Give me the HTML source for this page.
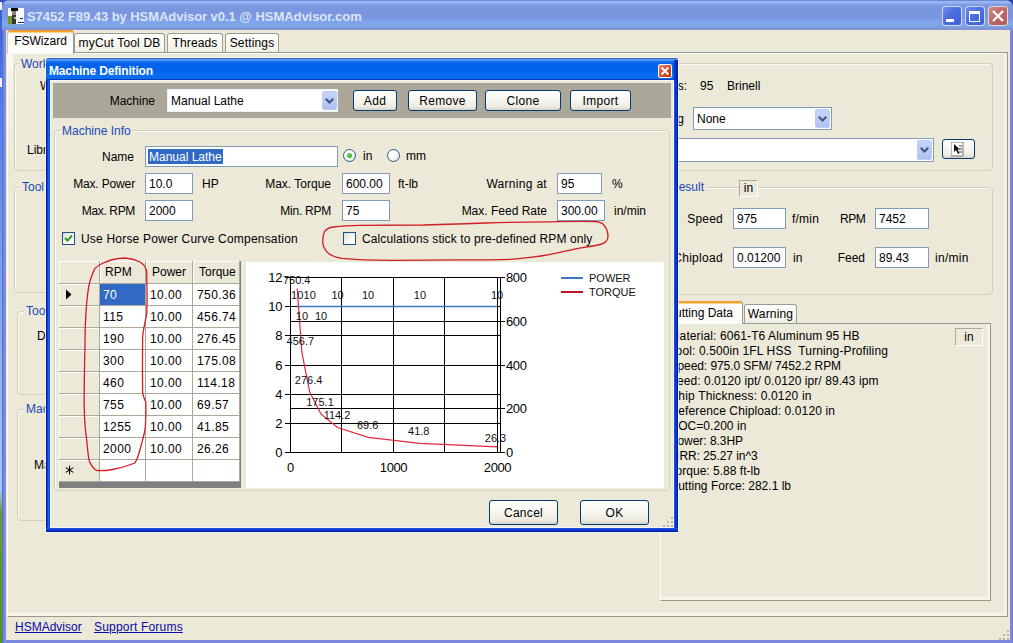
<!DOCTYPE html>
<html>
<head>
<meta charset="utf-8">
<title>S7452 F89.43 by HSMAdvisor v0.1 @ HSMAdvisor.com</title>
<style>
*{box-sizing:border-box;margin:0;padding:0}
html,body{width:1013px;height:643px;overflow:hidden}
body{position:relative;font-family:"Liberation Sans",sans-serif;font-size:12px;color:#000;
 background:linear-gradient(to bottom,#3a5cd0 0,#4a78e8 80px,#7aa4ec 280px,#a8c8f4 490px,#6a9a30 512px,#4f9a14 643px);}
.a{position:absolute}
.t{position:absolute;white-space:nowrap;font-size:12px;line-height:14px;color:#000}
.b{color:#1a4ab4}
/* main window */
#win{left:2px;top:0;width:1011px;height:643px;background:linear-gradient(to right,#5a70d0 0,#5a70d0 1px,#7080e0 1px,#7080e0 2px,#8090d8 2px,#8090d8 4px,#7a88de 4px,#7a88de 1008px,#8088e8 1009px,#7078d0 1011px);border-radius:8px 8px 0 0;overflow:hidden}
#tbar{left:0;top:0;width:1011px;height:30px;background:linear-gradient(to bottom,#6a8acb 0,#6a8acb 1px,#98b6f8 1px,#95b2f5 3px,#86a3e6 4px,#7e9be1 5px,#7a96df 7px,#7a96df 17px,#7d9be5 19px,#7fa3ef 21px,#7fa3ef 23px,#7ba6e0 24px,#7ba6e0 27px,#7c90e0 28px,#8a92d0 29px,#8a92d0 30px)}
#ttl{left:25px;top:8px;font-family:"Liberation Sans",sans-serif;font-weight:bold;font-size:13px;line-height:18px;color:#dbe5f9;letter-spacing:-.05px;white-space:nowrap}
.cb{top:6px;width:20px;height:20px;border:1px solid rgba(235,240,255,.8);border-radius:4px;background:linear-gradient(135deg,#6d8cec 0,#4a6ee0 45%,#3f61d6 100%)}
#client{left:4px;top:30px;width:1004px;height:610px;background:#ece9d8}
/* tabs */
.tab{position:absolute;top:3px;height:20px;border:1px solid #9a9c92;letter-spacing:.15px;border-bottom:none;border-radius:3px 3px 0 0;background:linear-gradient(to bottom,#ffffff,#f3f2ea 80%,#ebe9dc);font-size:12px;line-height:18px;text-align:center;white-space:nowrap}
.tab.sel{letter-spacing:0;top:0px;height:24px;background:#fcfcfa;border-top:2px solid #f0a030;padding-top:1px;box-shadow:inset 0 1px 0 #fbd48a;border-left-color:#c8c8bc;line-height:17px;z-index:3}
#page{left:1px;top:22px;width:1001px;height:565px;border:1px solid #919b9c;border-left-color:#fdfdfb;border-right-color:#9a978a;border-bottom-color:#9a978a;box-shadow:inset -3px -3px 0 #f5f3ea;background:linear-gradient(to bottom,#fbfbf7 0,#f3f1e6 30px,#ece9d8 120px)}
#inner{left:5px;top:1px;width:991px;height:559px;background:#ece9d8}
.gb{position:absolute;border:1px solid #d0d0bf;border-radius:4px;box-shadow:inset 1px 1px 0 #fbfbf6}
.gl{position:absolute;background:#ece9d8;padding:0 2px;color:#1848b8;font-size:12px;line-height:14px;white-space:nowrap}
.in{position:absolute;background:#fff;border:1px solid #7f9db9;font-size:12px;line-height:20px;padding-left:3px;white-space:nowrap;overflow:hidden}
.dd{position:absolute;width:15px;background:linear-gradient(to bottom,#c6d3fb,#b9c9f8 60%,#aec0f4);border:1px solid #bccbf6;border-radius:2px}
.dd:after{content:"";position:absolute;left:2px;top:6px;width:9px;height:6px;background:#42567e;clip-path:polygon(0 25%,16.7% 0,50% 50%,83.3% 0,100% 25%,50% 100%)}
.btn{position:absolute;border:1px solid #003c74;border-radius:3px;background:linear-gradient(to bottom,#ffffff 0,#f6f5ef 50%,#eceade 85%,#d6d0c5 100%);font-size:12px;line-height:21px;text-align:center;white-space:nowrap;letter-spacing:.3px}
/* dialog */
#dlg{z-index:2;left:46px;top:58px;width:632px;height:474px;border-radius:3px 3px 0 0;background:linear-gradient(to right,#0019b0 0,#0019b0 1px,#0a40e0 1px,#0a40e0 2px,#1a60f5 2px,#1a60f5 3px,#1050c0 3px,#1050c0 4px,#0a40e0 4px,#0a40e0 628px,#1a50e0 628px,#1a50e0 629px,#0a38d0 629px,#0a38d0 631px,#0018a8 631px);box-shadow:0 0 0 1px rgba(248,248,255,.75)}
#dtb{left:0;top:0;width:632px;height:22px;border-radius:3px 3px 0 0;background:linear-gradient(to bottom,#3a62b5 0,#3a62b5 1px,#5aa0fa 1px,#5aa0fa 2px,#2a7cf2 3px,#0f68ea 4px,#0062e8 6px,#0064ea 14px,#0a6cf0 16px,#0a6cf0 20px,#0a6af0 21px,#003cc0 21px,#003cc0 22px)}
#dttl{left:3px;top:6px;font-weight:bold;font-size:12px;line-height:14px;color:#fff;white-space:nowrap;letter-spacing:-.15px}
#dcl{left:612px;top:6px;width:14px;height:14px;border:1px solid #fff;border-radius:2px;background:linear-gradient(135deg,#e7886d,#d3502c 50%,#b8330f)}
#dc{left:4px;top:22px;width:624px;height:448px;background:#ece9d8;box-shadow:inset 1px 1px 0 #f4f6fc,inset -1px -1px 0 #f4f6fc}
#dbot{left:0;bottom:0;width:632px;height:4px;background:linear-gradient(to bottom,#1a50e0 0,#1a50e0 1px,#0a38d0 1px,#0a38d0 3px,#0018a8 3px)}
#band{left:3px;top:3px;width:618px;height:35px;background:#aca899}
/* grid */
#grid{left:9px;top:182px;width:182px;height:225px;background:#fff;overflow:hidden}
.hd{position:absolute;background:#ece9d8;border-right:1px solid #aca899;border-bottom:1px solid #aca899;box-shadow:inset 1px 1px 0 #fff;font-size:12px;line-height:21px;white-space:nowrap}
.c{position:absolute;background:#fff;border-right:1px solid #aca899;border-bottom:1px solid #aca899;font-size:12px;line-height:22px;padding-left:4px;white-space:nowrap;height:22px;width:47px;letter-spacing:.4px}
.rb{position:absolute;border-radius:50%;width:13px;height:13px;border:1px solid #2c5c88;background:radial-gradient(circle at 35% 35%,#fff 30%,#dcdcd2 100%)}
.ck{position:absolute;width:13px;height:13px;border:1px solid #1c5180;background:linear-gradient(135deg,#dcdcd4,#fff 70%)}
svg text{font-family:"Liberation Sans",sans-serif}
</style>
</head>
<body>
<!-- desktop fragments on the far left -->
<div class="a" style="left:0;top:0;width:3px;height:2px;background:#3050b8"></div>
<div class="a" style="left:0;top:2px;width:2px;height:8px;background:#f0f4ff"></div>
<div class="a" style="left:0;top:78px;width:2px;height:9px;background:#f0f4ff"></div>

<div class="a" style="left:1003px;top:0;width:10px;height:10px;background:#2a3db5"></div>
<div id="win" class="a">
 <div id="tbar" class="a"></div>
 <!-- app icon -->
 <div class="a" style="left:6px;top:8px;width:16px;height:16px;background:#fdfdfd"></div>
 <div class="a" style="left:9px;top:8px;width:7px;height:3px;background:#0a0a0a"></div>
 <div class="a" style="left:10px;top:11px;width:4px;height:6px;background:#8a8078"></div>
 <div class="a" style="left:6px;top:16px;width:6px;height:8px;background:#7e9030"></div>
 <div class="a" style="left:10px;top:15px;width:4px;height:9px;background:#2e3a30"></div>
 <div class="a" style="left:12px;top:17px;width:2px;height:2px;background:#c8b8a8"></div>
 <div class="a" style="left:18px;top:18px;width:3px;height:1px;background:#1a2470"></div>
 <div class="a" style="left:16px;top:22px;width:6px;height:1px;background:#1a2470"></div>
 <div id="ttl" class="a">S7452 F89.43 by HSMAdvisor v0.1 @ HSMAdvisor.com</div>
 <!-- caption buttons -->
 <div class="a cb" style="left:940px"><div class="a" style="left:3px;top:12px;width:8px;height:3px;background:#fff"></div></div>
 <div class="a cb" style="left:963px"><div class="a" style="left:3px;top:4px;width:11px;height:11px;border:1px solid #fff;border-top:3px solid #fff"></div></div>
 <div class="a cb" style="left:986px;background:linear-gradient(135deg,#cf8a86 0,#bf6a66 45%,#b25a5a 100%)">
  <svg class="a" style="left:0;top:0" width="18" height="18"><path d="M4 4 L14 14 M14 4 L4 14" stroke="#fff" stroke-width="2.3" fill="none"/></svg>
 </div>

 <div id="client" class="a">
  <!-- tab strip -->
  <div class="tab sel" style="left:1px;width:67px">FSWizard</div>
  <div class="tab" style="left:68px;width:91px">myCut Tool DB</div>
  <div class="tab" style="left:161px;width:56px">Threads</div>
  <div class="tab" style="left:219px;width:54px">Settings</div>
  <div id="page" class="a">
   <div id="inner" class="a"></div>
  </div>
  <div class="t" style="left:9px;top:590px;color:#0a0aa8;text-decoration:underline">HSMAdvisor</div>
  <div class="t" style="left:88px;top:590px;color:#0a0aa8;text-decoration:underline;letter-spacing:.2px">Support Forums</div>
  <!-- size grip -->
  <svg class="a" style="left:992px;top:599px" width="14" height="14"><g fill="#b8b4a2"><rect x="9" y="1" width="2" height="2"/><rect x="5" y="5" width="2" height="2"/><rect x="9" y="5" width="2" height="2"/><rect x="1" y="9" width="2" height="2"/><rect x="5" y="9" width="2" height="2"/><rect x="9" y="9" width="2" height="2"/></g></svg>
 </div>
</div>

<!-- ===== content of FSWizard page (absolute page coordinates) ===== -->
<div id="pg" class="a" style="z-index:1;left:0;top:0;width:1013px;height:643px">
 <!-- left group boxes (mostly hidden by dialog) -->
 <div class="gb" style="left:14px;top:63px;width:640px;height:108px"></div>
 <div class="gl" style="left:19px;top:57px">Workpiece</div>
 <div class="t" style="left:40px;top:79px">Workpiece</div>
 <div class="t" style="left:27px;top:143px">Library</div>

 <div class="gb" style="left:14px;top:187px;width:640px;height:106px"></div>
 <div class="gl" style="left:20px;top:180px">Tool</div>

 <div class="gb" style="left:17px;top:311px;width:637px;height:84px"></div>
 <div class="gl" style="left:24px;top:304px">Tool Data</div>
 <div class="t" style="left:37px;top:329px">Diameter</div>

 <div class="gb" style="left:17px;top:409px;width:637px;height:112px"></div>
 <div class="gl" style="left:24px;top:402px">Machine</div>
 <div class="t" style="left:34px;top:458px">Machine</div>

 <!-- right top group -->
 <div class="gb" style="left:660px;top:63px;width:333px;height:108px"></div>
 <div class="t" style="left:630px;top:79px;width:57px;text-align:right">Hardness:</div>
 <div class="t" style="left:700px;top:79px">95</div>
 <div class="t" style="left:727px;top:79px">Brinell</div>
 <div class="t" style="left:630px;top:112px;width:54px;text-align:right">Coating</div>
 <div class="in" style="left:693px;top:107px;width:139px;height:23px;line-height:23px">None</div>
 <div class="dd" style="left:815px;top:109px;height:19px"></div>
 <div class="in" style="left:500px;top:138px;width:434px;height:24px"></div>
 <div class="dd" style="left:917px;top:140px;height:20px"></div>
 <div class="btn" style="left:942px;top:139px;width:33px;height:20px"></div>
 <svg class="a" style="left:951px;top:142px" width="14" height="15"><rect x="0" y="0" width="12" height="14" fill="#fff" stroke="#777" stroke-width="1"/><path d="M3 2v8l2-2 2 4 1.5-.8L6.6 7.4H9z" fill="#111"/><path d="M8 4h3M8 7h3M8 10h3" stroke="#444" stroke-width="1"/></svg>

 <!-- result group -->
 <div class="gb" style="left:660px;top:187px;width:333px;height:108px"></div>
 <div class="gl" style="left:668px;top:180px;padding-right:2px">Result</div>
 <div class="a" style="left:739px;top:180px;width:19px;height:17px;background:#ece9d8;border:1px solid #aca899;border-right-color:#fff;border-bottom-color:#fff;font-size:12px;line-height:15px;text-align:center">in</div>
 <div class="t" style="right:290px;top:212px;letter-spacing:.2px">Speed</div>
 <div class="in" style="left:733px;top:208px;width:53px;height:21px">975</div>
 <div class="t" style="left:792px;top:212px;letter-spacing:.2px">f/min</div>
 <div class="t" style="left:840px;top:212px;letter-spacing:-.5px">RPM</div>
 <div class="in" style="left:875px;top:208px;width:54px;height:21px">7452</div>
 <div class="t" style="right:290px;top:251px;letter-spacing:.3px">Chipload</div>
 <div class="in" style="left:733px;top:247px;width:53px;height:21px">0.01200</div>
 <div class="t" style="left:793px;top:251px">in</div>
 <div class="t" style="right:148px;top:251px">Feed</div>
 <div class="in" style="left:875px;top:247px;width:54px;height:21px">89.43</div>
 <div class="t" style="left:935px;top:251px;letter-spacing:.3px">in/min</div>

 <!-- cutting data tab control -->
 <div class="a" style="left:660px;top:323px;width:331px;height:278px;border:1px solid #919b9c;border-right-color:#9a978a;border-bottom-color:#9a978a;border-left-color:#fff;background:#ece9d8;box-shadow:inset -3px -3px 0 #f5f3ea"></div>
 <div class="tab sel" style="left:640px;top:301px;width:103px;height:23px;text-align:right;padding-right:9px;line-height:19px">Cutting Data</div>
 <div class="tab" style="left:744px;top:304px;width:53px;height:19px;line-height:18px">Warning</div>
 <div class="a" style="left:955px;top:328px;width:28px;height:18px;border:1px solid #aca899;border-right-color:#fff;border-bottom-color:#fff;font-size:12px;line-height:16px;text-align:center">in</div>
 <div class="t" style="left:669.5px;top:329px;letter-spacing:0.106px">Material: 6061-T6 Aluminum 95 HB</div>
 <div class="t" style="left:669.5px;top:344px;white-space:pre;letter-spacing:0.120px">Tool: 0.500in 1FL HSS  Turning-Profiling</div>
 <div class="t" style="left:669.5px;top:359px;letter-spacing:-0.068px">Speed: 975.0 SFM/ 7452.2 RPM</div>
 <div class="t" style="left:669.5px;top:374px;letter-spacing:0.074px">Feed: 0.0120 ipt/ 0.0120 ipr/ 89.43 ipm</div>
 <div class="t" style="left:669.5px;top:389px;letter-spacing:0.168px">Chip Thickness: 0.0120 in</div>
 <div class="t" style="left:669.5px;top:404px;letter-spacing:0.117px">Reference Chipload: 0.0120 in</div>
 <div class="t" style="left:669.5px;top:419px;letter-spacing:0.042px">DOC=0.200 in</div>
 <div class="t" style="left:669.5px;top:434px;letter-spacing:-0.042px">Power: 8.3HP</div>
 <div class="t" style="left:669.5px;top:449px;letter-spacing:-0.060px">MRR: 25.27 in^3</div>
 <div class="t" style="left:669.5px;top:464px;letter-spacing:0.022px">Torque: 5.88 ft-lb</div>
 <div class="t" style="left:669.5px;top:479px;letter-spacing:0.004px">Cutting Force: 282.1 lb</div>
</div>

<!-- ===== Machine Definition dialog ===== -->
<div id="dlg" class="a">
 <div id="dtb" class="a"></div>
 <div class="a" style="right:0;top:2px;width:4px;height:20px;background:linear-gradient(to right,#0a3ad0,#0a2fb8 50%,#0019a8)"></div>
 <div id="dttl" class="a">Machine Definition</div>
 <div id="dcl" class="a"><svg class="a" style="left:0;top:0" width="12" height="12"><path d="M2.5 2.5 L9.5 9.5 M9.5 2.5 L2.5 9.5" stroke="#fff" stroke-width="1.8" fill="none"/></svg></div>
 <div id="dbot" class="a"></div>
 <div id="dc" class="a">
  <div id="band" class="a"></div>
 </div>
</div>

<!-- dialog content in page coordinates -->
<div id="dg" class="a" style="z-index:3;left:0;top:0;width:1013px;height:643px">
 <div class="t" style="right:858px;top:94px">Machine</div>
 <div class="in" style="left:167px;top:89px;width:171px;height:23px;line-height:23px;border-color:#eef2fa">Manual Lathe</div>
 <div class="dd" style="left:322px;top:91px;height:19px"></div>
 <div class="btn" style="left:353px;top:90px;width:44px;height:21px">Add</div>
 <div class="btn" style="left:408px;top:90px;width:69px;height:21px">Remove</div>
 <div class="btn" style="left:485px;top:90px;width:76px;height:21px">Clone</div>
 <div class="btn" style="left:570px;top:90px;width:61px;height:21px">Import</div>

 <div class="gb" style="left:54px;top:130px;width:616px;height:361px"></div>
 <div class="gl" style="left:60px;top:124px">Machine Info</div>

 <div class="t" style="right:879px;top:150px">Name</div>
 <div class="in" style="left:145px;top:146px;width:193px;height:21px;padding-left:2px"><span style="background:#316ac5;color:#fff;display:inline-block;height:15px;line-height:15px;margin-top:2px;padding:0 1px;vertical-align:top;line-height:16px">Manual Lathe</span></div>
 <div class="rb" style="left:343px;top:149px"><div class="a" style="left:3px;top:3px;width:5px;height:5px;border-radius:50%;background:radial-gradient(circle at 40% 40%,#6fd24a,#21a121)"></div></div>
 <div class="t" style="left:363px;top:149px">in</div>
 <div class="rb" style="left:387px;top:149px"></div>
 <div class="t" style="left:406px;top:149px">mm</div>

 <div class="t" style="right:878px;top:177px;letter-spacing:-.15px">Max. Power</div>
 <div class="in" style="left:145px;top:173px;width:48px;height:21px">10.0</div>
 <div class="t" style="left:202px;top:177px">HP</div>
 <div class="t" style="right:682px;top:177px">Max. Torque</div>
 <div class="in" style="left:342px;top:173px;width:48px;height:21px">600.00</div>
 <div class="t" style="left:398px;top:177px">ft-lb</div>
 <div class="t" style="right:466px;top:177px;letter-spacing:.3px">Warning at</div>
 <div class="in" style="left:557px;top:173px;width:45px;height:21px">95</div>
 <div class="t" style="left:612px;top:177px">%</div>

 <div class="t" style="right:878px;top:204px;letter-spacing:-.35px">Max. RPM</div>
 <div class="in" style="left:145px;top:200px;width:48px;height:21px">2000</div>
 <div class="t" style="right:682px;top:204px;letter-spacing:-.25px">Min. RPM</div>
 <div class="in" style="left:342px;top:200px;width:48px;height:21px">75</div>
 <div class="t" style="right:466px;top:204px">Max. Feed Rate</div>
 <div class="in" style="left:557px;top:200px;width:48px;height:21px">300.00</div>
 <div class="t" style="left:614px;top:204px">in/min</div>

 <div class="ck" style="left:62px;top:232px"><svg class="a" style="left:0;top:0" width="11" height="11"><path d="M2 5 L4.5 7.5 L9 2.5" stroke="#21a121" stroke-width="2" fill="none"/></svg></div>
 <div class="t" style="left:81px;top:232px;letter-spacing:.2px">Use Horse Power Curve Compensation</div>
 <div class="ck" style="left:343px;top:232px"></div>
 <div class="t" style="left:362px;top:232px;letter-spacing:.12px">Calculations stick to pre-defined RPM only</div>

 <div class="btn" style="left:489px;top:500px;width:69px;height:25px;line-height:25px">Cancel</div>
 <div class="btn" style="left:580px;top:500px;width:69px;height:25px;line-height:25px">OK</div>
 <svg class="a" style="left:662px;top:516px" width="12" height="12"><g fill="#b8b4a2"><rect x="9" y="1" width="2" height="2"/><rect x="5" y="5" width="2" height="2"/><rect x="9" y="5" width="2" height="2"/><rect x="1" y="9" width="2" height="2"/><rect x="5" y="9" width="2" height="2"/><rect x="9" y="9" width="2" height="2"/></g></svg>
<div class="a" style="left:59px;top:261px;width:182px;height:227px;background:#808080;overflow:hidden">
<div class="hd" style="left:0;top:0;width:41px;height:23px"></div>
<div class="hd" style="left:41px;top:0;width:46px;height:23px;padding-left:5px;line-height:23px">RPM</div>
<div class="hd" style="left:87px;top:0;width:47px;height:23px;padding-left:6px;line-height:23px">Power</div>
<div class="hd" style="left:134px;top:0;width:47px;height:23px;padding-left:6px;line-height:23px">Torque</div>
<div class="hd" style="left:0;top:23px;width:41px;height:22px"></div>
<div class="c" style="left:41px;top:23px;width:46px;padding-left:3px;background:#316ac5;color:#fff">70</div>
<div class="c" style="left:87px;top:23px;width:47px;padding-left:4px">10.00</div>
<div class="c" style="left:134px;top:23px;width:47px;padding-left:4px">750.36</div>
<div class="hd" style="left:0;top:45px;width:41px;height:22px"></div>
<div class="c" style="left:41px;top:45px;width:46px;padding-left:3px">115</div>
<div class="c" style="left:87px;top:45px;width:47px;padding-left:4px">10.00</div>
<div class="c" style="left:134px;top:45px;width:47px;padding-left:4px">456.74</div>
<div class="hd" style="left:0;top:67px;width:41px;height:22px"></div>
<div class="c" style="left:41px;top:67px;width:46px;padding-left:3px">190</div>
<div class="c" style="left:87px;top:67px;width:47px;padding-left:4px">10.00</div>
<div class="c" style="left:134px;top:67px;width:47px;padding-left:4px">276.45</div>
<div class="hd" style="left:0;top:89px;width:41px;height:22px"></div>
<div class="c" style="left:41px;top:89px;width:46px;padding-left:3px">300</div>
<div class="c" style="left:87px;top:89px;width:47px;padding-left:4px">10.00</div>
<div class="c" style="left:134px;top:89px;width:47px;padding-left:4px">175.08</div>
<div class="hd" style="left:0;top:111px;width:41px;height:22px"></div>
<div class="c" style="left:41px;top:111px;width:46px;padding-left:3px">460</div>
<div class="c" style="left:87px;top:111px;width:47px;padding-left:4px">10.00</div>
<div class="c" style="left:134px;top:111px;width:47px;padding-left:4px">114.18</div>
<div class="hd" style="left:0;top:133px;width:41px;height:22px"></div>
<div class="c" style="left:41px;top:133px;width:46px;padding-left:3px">755</div>
<div class="c" style="left:87px;top:133px;width:47px;padding-left:4px">10.00</div>
<div class="c" style="left:134px;top:133px;width:47px;padding-left:4px">69.57</div>
<div class="hd" style="left:0;top:155px;width:41px;height:22px"></div>
<div class="c" style="left:41px;top:155px;width:46px;padding-left:3px">1255</div>
<div class="c" style="left:87px;top:155px;width:47px;padding-left:4px">10.00</div>
<div class="c" style="left:134px;top:155px;width:47px;padding-left:4px">41.85</div>
<div class="hd" style="left:0;top:177px;width:41px;height:22px"></div>
<div class="c" style="left:41px;top:177px;width:46px;padding-left:3px">2000</div>
<div class="c" style="left:87px;top:177px;width:47px;padding-left:4px">10.00</div>
<div class="c" style="left:134px;top:177px;width:47px;padding-left:4px">26.26</div>
<div class="hd" style="left:0;top:199px;width:41px;height:22px"></div>
<div class="c" style="left:41px;top:199px;width:46px;padding-left:3px"></div>
<div class="c" style="left:87px;top:199px;width:47px;padding-left:4px"></div>
<div class="c" style="left:134px;top:199px;width:47px;padding-left:4px"></div>
<svg class="a" style="left:6px;top:28px" width="8" height="11"><path d="M1 0.5 L6.5 5.5 L1 10.5z" fill="#000"/></svg>
<svg class="a" style="left:6px;top:204px" width="10" height="10"><path d="M4.5 0.5v9M0.700 2.600l7.600 4.800M8.300 2.600l-7.600 4.800" stroke="#000" stroke-width="1.100" fill="none"/></svg>
</div>
<svg class="a" style="left:246px;top:262px" width="418" height="226" viewBox="246 262 418 226">
<rect x="246" y="262" width="418" height="226" fill="#fff"/>
<g stroke="#000" stroke-width="1" shape-rendering="crispEdges">
<line x1="290" y1="277.5" x2="500" y2="277.5"/>
<line x1="290" y1="306.5" x2="500" y2="306.5"/>
<line x1="290" y1="321.5" x2="500" y2="321.5"/>
<line x1="290" y1="335.5" x2="500" y2="335.5"/>
<line x1="290" y1="365.5" x2="500" y2="365.5"/>
<line x1="290" y1="394.5" x2="500" y2="394.5"/>
<line x1="290" y1="408.5" x2="500" y2="408.5"/>
<line x1="290" y1="423.5" x2="500" y2="423.5"/>
<line x1="290" y1="452.5" x2="500" y2="452.5"/>
<line x1="290.5" y1="277" x2="290.5" y2="453"/>
<line x1="341.5" y1="277" x2="341.5" y2="453"/>
<line x1="393.5" y1="277" x2="393.5" y2="453"/>
<line x1="444.5" y1="277" x2="444.5" y2="453"/>
<line x1="497.5" y1="277" x2="497.5" y2="453"/>
<line x1="500.5" y1="277" x2="500.5" y2="453"/>
<line x1="285" y1="277.5" x2="290" y2="277.5"/>
<line x1="285" y1="306.5" x2="290" y2="306.5"/>
<line x1="285" y1="335.5" x2="290" y2="335.5"/>
<line x1="285" y1="365.5" x2="290" y2="365.5"/>
<line x1="285" y1="394.5" x2="290" y2="394.5"/>
<line x1="285" y1="423.5" x2="290" y2="423.5"/>
<line x1="285" y1="452.5" x2="290" y2="452.5"/>
<line x1="500" y1="277.5" x2="505" y2="277.5"/>
<line x1="500" y1="321.5" x2="505" y2="321.5"/>
<line x1="500" y1="365.5" x2="505" y2="365.5"/>
<line x1="500" y1="408.5" x2="505" y2="408.5"/>
<line x1="500" y1="452.5" x2="505" y2="452.5"/>
</g>
<g font-size="13" fill="#000" letter-spacing="-0.4">
<text x="282" y="282.0" text-anchor="end">12</text>
<text x="282" y="311.0" text-anchor="end">10</text>
<text x="282" y="340.0" text-anchor="end">8</text>
<text x="282" y="370.0" text-anchor="end">6</text>
<text x="282" y="399.0" text-anchor="end">4</text>
<text x="282" y="428.0" text-anchor="end">2</text>
<text x="282" y="457.0" text-anchor="end">0</text>
<text x="506" y="282.0">800</text>
<text x="506" y="326.0">600</text>
<text x="506" y="370.0">400</text>
<text x="506" y="413.0">200</text>
<text x="506" y="457.0">0</text>
<text x="290.5" y="472" text-anchor="middle">0</text>
<text x="393.5" y="472" text-anchor="middle">1000</text>
<text x="497.5" y="472" text-anchor="middle">2000</text>
</g>
<line x1="297.2" y1="306.5" x2="497.0" y2="306.5" stroke="#3b78c6" stroke-width="1.6"/>
<polyline points="297.2,288.4 301.9,352.6 309.7,392.0 321.1,414.2 337.6,427.5 368.1,437.3 419.9,443.3 497.0,446.8" fill="none" stroke="#e0283c" stroke-width="1.2"/>
<g font-size="11" fill="#111" text-anchor="middle">
<text x="297.2" y="298.7">10</text>
<text x="301.9" y="319.8">10</text>
<text x="309.7" y="298.7">10</text>
<text x="321.1" y="319.8">10</text>
<text x="337.6" y="298.7">10</text>
<text x="368.1" y="298.7">10</text>
<text x="419.9" y="298.7">10</text>
<text x="497.0" y="298.7">10</text>
<text x="296.7" y="284.4">750.4</text>
<text x="300.3" y="344.8">456.7</text>
<text x="308.6" y="383.7">276.4</text>
<text x="320" y="406.1">175.1</text>
<text x="337" y="419.1">114.2</text>
<text x="367.7" y="428.9">69.6</text>
<text x="418.8" y="434.9">41.8</text>
<text x="495.5" y="441.7">26.3</text>
</g>
<line x1="561" y1="278" x2="583" y2="278" stroke="#3b78c6" stroke-width="2"/>
<line x1="561" y1="292" x2="583" y2="292" stroke="#c0142c" stroke-width="2"/>
<g font-size="11" fill="#111"><text x="589" y="282">POWER</text><text x="589" y="296">TORQUE</text></g>
</svg>
<svg class="a" style="left:0;top:0;pointer-events:none" width="1013" height="643">
<g fill="none" stroke="#d21c24" stroke-width="1.3" stroke-linejoin="round" stroke-linecap="round">
<path d="M324.300 232 C326 229 329 227.500 333.700 227 C342 226 351 225.500 360 225.300 C385 225.200 405 225.200 423 225 C445 224.500 465 223.800 486 223 C508 222.300 528 222 549 221.800 C565 221.500 580 221.300 594 221.500 C598 221.800 601 222.500 603 224 C606 227 608 231 608 236.500 C608 238.500 607.500 240 606 241.500 C604.500 243 602.500 244 600 244.500 C594 246 588 246.800 581 247.800 C570 250 560 252.500 549 254.600 C543 255.800 538 256.500 532 257.200 C525 258.300 518 259 510 259.300 C493 259.800 477 259.800 460 259.800 C437 260 415 260.400 392 260.400 C375 260.200 358 259.800 342 258.300 C336 257.500 331 256 327.400 252.400 C324.500 249 322.700 245 322.700 241.400 C322.700 238 323 235 324.300 232z"/>
<path d="M125 258 C120 258 116 258.700 113 259.500 C109 260.500 106 261.800 103 263 C100 264.500 97 266.500 95 268.400 C91.500 275 89 283 87.900 291.800 C85.800 308 85 326 85 345 C84.500 366 84 388 84.200 408 C84.500 420 85.500 432 86.700 440 C87.500 448 88 455 89 460 C91 466 93 469 97 470.500 C102 471 107 470.500 112.500 469.500 C120 468 128 465.500 135 463 C138 458 139.500 452 141 446 C142.500 440 144 435 145 430 C146 420 146 410 145.800 402 C144 398 142.600 395 142.600 392 C142.400 374 142.400 356 142.600 338 C143 328 146 320 146.800 313 C147.200 303 147.200 292 146.800 282 C146.800 277 146.800 274 146.600 271 C145.800 267 143.500 264 140 262 C136 260 131 258.500 125 258z"/>
</g></svg>
</div>
</body>
</html>
